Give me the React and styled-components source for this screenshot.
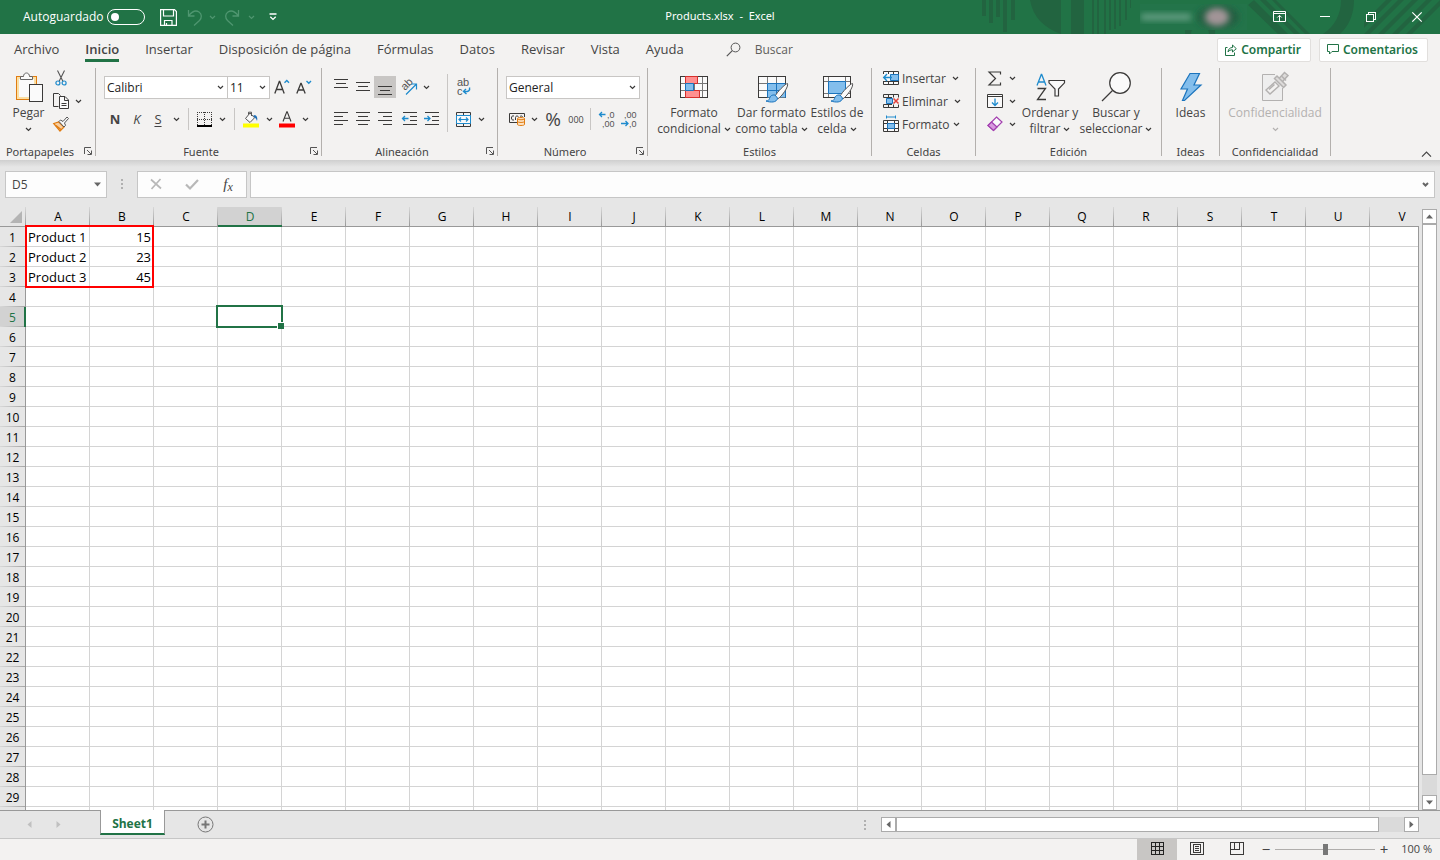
import styled, { createGlobalStyle } from "styled-components";

const GlobalStyle = createGlobalStyle`
  * {
    box-sizing: border-box;
  }
  body {
    margin: 0;
    overflow: hidden;
    font-family: "Open Sans", "Noto Sans", sans-serif;
    font-size: 12px;
    color: #444;
  }
  button, input, select {
    font: inherit;
    color: inherit;
    margin: 0;
    border-radius: 0;
  }
  button {
    display: flex;
    align-items: center;
    justify-content: center;
    padding: 0;
    border: none;
    background: none;
  }
  svg {
    display: block;
    flex: none;
  }
`;

const GREEN = "#217346";
const BLUE = "#1e8bcd";
const DARK = "#3b3a39";

/* ---------- icons ---------- */

function Svg({ w = 16, h = 16, color = DARK, crisp, children }) {
  return (
    <svg
      width={w}
      height={h}
      viewBox={`0 0 ${w} ${h}`}
      fill="none"
      stroke={color}
      overflow="visible"
      shapeRendering={crisp ? "crispEdges" : undefined}
      aria-hidden="true"
    >
      {children}
    </svg>
  );
}

const Glyphs = styled.text`
  font-family: "Liberation Sans", sans-serif;
  font-size: ${(p) => p.$size || 9}px;
  fill: #555;
  stroke: none;
`;

const Chevron = ({ color = DARK, bold }) => (
  <Svg w={7} h={5} color={color}>
    <path d="M1 1l2.5 2.5L6 1" strokeWidth={bold ? 2 : 1.2} />
  </Svg>
);

const SaveIcon = () => (
  <Svg w={17} h={17} color="#fff">
    <path d="M.6.6h13.9l1.9 1.9v13.9H.6z" strokeWidth="1.2" />
    <path d="M3.5 1v6h10V1M4.5 16.5v-5h7.5v5M6.5 14v2.5" strokeWidth="1.2" />
  </Svg>
);

const UndoIcon = () => (
  <Svg w={16} h={17} color="#4f9670">
    <path d="M1.5 1v6h6M1.7 6.8C5 2.5 9 1 12 3s3 6 .5 8.5L7 16.5" strokeWidth="1.3" />
  </Svg>
);

const RedoIcon = () => (
  <Svg w={16} h={17} color="#4f9670">
    <path d="M14.5 1v6h-6M14.3 6.8C11 2.5 7 1 4 3s-3 6-.5 8.5L9 16.5" strokeWidth="1.3" />
  </Svg>
);

const CustomizeIcon = () => (
  <Svg w={8} h={8} color="#fff">
    <path d="M.5 1h7M1.3 3.7L4 6.4l2.7-2.7" strokeWidth="1.3" />
  </Svg>
);

const RibbonModeIcon = () => (
  <Svg w={13} h={11} color="#fff">
    <path d="M.5.5h12v10H.5zM.5 2.5h12M6.5 10V4.5M4.3 6.5l2.2-2.2 2.2 2.2" />
  </Svg>
);

const MinimizeIcon = () => (
  <Svg w={10} h={2} color="#fff" crisp>
    <path d="M0 .5h10" />
  </Svg>
);

const RestoreIcon = () => (
  <Svg w={10} h={10} color="#fff" crisp>
    <path d="M.5 2.5h7v7h-7zM2.5 2V.5h7v7H8" />
  </Svg>
);

const CloseIcon = () => (
  <Svg w={10} h={10} color="#fff">
    <path d="M.3.3l9.4 9.4M9.7.3L.3 9.7" strokeWidth="1.2" />
  </Svg>
);

const SearchIcon = () => (
  <Svg w={15} h={15} color="#555">
    <circle cx="9.5" cy="5.5" r="4.4" />
    <path d="M6.3 8.7L.8 14.2" strokeWidth="1.2" />
  </Svg>
);

const ShareIcon = () => (
  <Svg w={12} h={12} color={GREEN}>
    <path d="M2.5 3.5H.5v8h9v-3" />
    <path d="M3 8c.3-3 2-4.5 4.500-4.500V1L11.3 4.700 7.500 8V5.800C5.500 5.800 4 6.500 3 8z" />
  </Svg>
);

const CommentIcon = () => (
  <Svg w={12} h={11} color={GREEN}>
    <path d="M.5.5h11v7H5L2.5 10V7.5h-2z" />
  </Svg>
);

const PasteIcon = () => (
  <Svg w={28} h={30}>
    <rect x="1.5" y="4.5" width="20" height="23" fill="#fbe0a4" stroke="#e07c11" />
    <rect x="4" y="7" width="15" height="18" fill="#fafafa" stroke="none" />
    <path d="M5.5 7.5v-3h3c0-2 1.2-3.5 3-3.5s3 1.500 3 3.500h3v3z" fill="#fafafa" stroke="#666" />
    <rect x="14.5" y="12.5" width="13" height="17" fill="#fafafa" />
  </Svg>
);

const CutIcon = () => (
  <Svg w={12} h={16}>
    <path d="M2.5.5l5.500 11M9.500.5L4 11.500" stroke="#555" strokeWidth="1.1" />
    <circle cx="2.9" cy="13" r="2" stroke={BLUE} strokeWidth="1.2" />
    <circle cx="9.1" cy="13" r="2" stroke={BLUE} strokeWidth="1.2" />
  </Svg>
);

const CopyIcon = () => (
  <Svg w={16} h={16}>
    <path d="M5.5 13.5h-5V.5h5l2 2" />
    <path d="M6.5 3.5h5.5l3.500 3.500v8.500h-9zM11.5 3.500v4h4M8.500 10.500h5M8.500 12.500h5" fill="#fafafa" />
  </Svg>
);

const PainterIcon = () => (
  <Svg w={16} h={16}>
    <path d="M.7 7.5l5-1.5L11 11l-4 4z" fill="#f8cfa0" stroke="#e07c11" strokeWidth="1.2" />
    <path d="M3 9.5l5 4" stroke="#e07c11" strokeWidth="1.2" />
    <path d="M6 5.5L7.500 4 10 5.500 14 1l1.500 1.500-4 4.500 1 2.300L11 11z" fill="#fafafa" stroke="#555" />
  </Svg>
);

const LauncherIcon = () => (
  <Svg w={8} h={8} color="#555">
    <path d="M.5 7V.5H7M3 3l4 4M7.5 3.5v4h-4" />
  </Svg>
);

const GrowFontIcon = ({ small }) => (
  <Svg w={15} h={18}>
    {small ? (
      <path d="M.8 14.5l4-10h.4l4 10M2.2 11h5.600" strokeWidth="1.3" />
    ) : (
      <path d="M.8 14.5l4.500-12h.4l4.500 12M2.400 10.500h6.200" strokeWidth="1.3" />
    )}
    <path d={small ? "M10.5 2l2.300 2.200L15 2" : "M10.500 3.700l2.300-2.200L15 3.700"} stroke={BLUE} strokeWidth="1.4" />
  </Svg>
);

const BordersIcon = () => (
  <Svg w={15} h={15} crisp>
    <path d="M0 .5h15M0 7.5h15M.5 0v14M7.5 0v14M14.5 0v14" strokeDasharray="1 1" />
    <path d="M0 14h15" strokeWidth="2" stroke="#000" />
  </Svg>
);

const FillIcon = () => (
  <Svg w={16} h={17}>
    <path d="M7 2L2.5 7.5 7 11.500l4.500-4.700zM5.500 3.500V1.200h3V5" fill="#fafafa" stroke="#555" />
    <path d="M10.500 4c3 0 4.500 2 3.500 6-.8-2-1.500-3.500-3-3.700z" fill="#1e6fb8" stroke="none" />
    <path d="M0 14.5h16" stroke="#ff0" strokeWidth="4" />
  </Svg>
);

const FontColorIcon = () => (
  <Svg w={16} h={17}>
    <path d="M4 10.5L7.800.8h.4L12 10.500M5.200 7.200h5.600" strokeWidth="1.1" />
    <path d="M0 14.5h16" stroke="red" strokeWidth="4" />
  </Svg>
);

// each entry is the start and end of one text line
const lineSets = {
  top: [[0, 14], [2, 12], [0, 14]],
  middle: [[0, 14], [2, 12], [0, 14]],
  bottom: [[0, 14], [2, 12], [0, 14]],
  left: [[0, 14], [0, 9], [0, 14], [0, 9]],
  center: [[0, 14], [2, 12], [0, 14], [2, 12]],
  right: [[0, 14], [5, 14], [0, 14], [5, 14]],
};
const lineStart = { top: 1, middle: 4, bottom: 8 };

const LinesIcon = ({ kind }) => {
  const start = lineStart[kind] ?? 2;
  return (
    <Svg w={14} h={18} crisp>
      {lineSets[kind].map(([a, b], i) => (
        <path key={i} d={`M${a} ${start + i * 4 + 0.5}H${b}`} />
      ))}
    </Svg>
  );
};

const IndentIcon = ({ inward }) => (
  <Svg w={15} h={18}>
    <path d="M1 2.5h13.5M8 6.5h6.5M8 10.5h6.5M1 14.5h13.5" shapeRendering="crispEdges" />
    <path
      d={inward ? "M0 8.5h5.5M3.5 6L6 8.5 3.5 11" : "M6.5 8.5H1M3 6L.5 8.5 3 11"}
      stroke={BLUE}
      strokeWidth="1.3"
    />
  </Svg>
);

const OrientationIcon = () => (
  <Svg w={17} h={17}>
    <Glyphs $size={11} transform="translate(5 12) rotate(-45)">ab</Glyphs>
    <path d="M6 15.5l10-10M11 5h5.5v5.5" stroke={BLUE} strokeWidth="1.2" />
  </Svg>
);

const WrapIcon = () => (
  <Svg w={15} h={18}>
    <Glyphs $size={11} x="1" y="8">ab</Glyphs>
    <Glyphs $size={11} x="1" y="17">c</Glyphs>
    <path d="M13.5 9.5c.8 3-1 4.500-6 4M10 11l-2.500 2.500L10.500 16" stroke={BLUE} strokeWidth="1.4" />
  </Svg>
);

const MergeIcon = () => (
  <Svg w={15} h={15}>
    <path d="M.5.5h14v14H.5zM.5 3.5h14M.5 11.5h14M7.5.5v3M7.5 11.5v3" />
    <path d="M.5 3.5h14v8H.5z" fill="#fafafa" stroke={BLUE} />
    <path d="M3 7.5h9M5 5.5l-2 2 2 2M10 5.5l2 2-2 2" stroke={BLUE} strokeWidth="1.2" />
  </Svg>
);

const CurrencyIcon = () => (
  <Svg w={17} h={15}>
    <path d="M8 10.5H.5v-9h15V5" />
    <path d="M5 4c-2-.5-2.5.5-2.5 2S3 8.300 5 8M6.500 8V5.500c0-2 3-2 3 0M11 4.500c1-1 2.500-.5 2.500.5" />
    <path d="M8.5 6.5c0-1.300 7-1.300 7 0v6c0 1.300-7 1.300-7 0z" fill="#fde3c4" stroke="#e07c11" />
    <path d="M8.5 7c1 1 6 1 7 0M8.500 9.700c1 1 6 1 7 0" stroke="#e07c11" />
  </Svg>
);

const DecimalIcon = ({ more }) => (
  <Svg w={17} h={18}>
    <Glyphs x={more ? 8 : 3} y="8">{more ? ",0" : ",00"}</Glyphs>
    <Glyphs x={more ? 3 : 8} y="17">{more ? ",00" : ",0"}</Glyphs>
    {more ? (
      <path d="M6.5 4.5H.7M3 2L.5 4.5 3 7" stroke={BLUE} strokeWidth="1.3" />
    ) : (
      <path d="M0 13.5h7M4.5 11L7 13.5 4.5 16" stroke={BLUE} strokeWidth="1.3" />
    )}
  </Svg>
);

const ConditionalIcon = () => (
  <Svg w={28} h={26}>
    <rect x=".5" y="2.5" width="27" height="21" fill="#fafafa" />
    <path d="M.5 9.5h27M.5 16.5h27M5.5 2.5v21M14.5 2.5v21M22.5 2.5v21" stroke="#777" />
    <path d="M.5 2.5h27v21H.5z" />
    <path d="M5.5 2.5h12v7h-12zM5.5 16.5h14v7h-14z" fill="#ff9090" stroke="#d8302c" />
    <path d="M5.5 9.5h8v7h-8z" fill="#83beec" stroke="#1b74bd" />
  </Svg>
);

const Brush = () => (
  <>
    <path d="M29.5 9.5c-2 0-11 9-12.500 13l2.500 2.500c4-2 11.500-12.500 10-15.500z" fill="#fafafa" stroke="#555" />
    <path d="M17 21c-3-.5-5 1-5.500 3.500-.5 1.500-1.500 2.500-3.500 2.500 4 1.500 11 2 11.500-3z" fill="#83beec" stroke="#1b74bd" />
  </>
);

const TableStyleIcon = () => (
  <Svg w={28} h={26}>
    <rect x=".5" y="2.5" width="27" height="21" fill="#fafafa" />
    <path d="M9.5 9.5h18v14h-18z" fill="#83beec" stroke="none" />
    <path d="M.5 9.5h9M.5 16.5h9M9.5 2.5v7M18.5 2.5v7" stroke="#777" />
    <path d="M9.5 23.5v-14h18v14M9.5 16.5h18M18.5 9.5v14" stroke="#1b74bd" />
    <path d="M9 23.5H.5v-21h27v7" />
    <Brush />
  </Svg>
);

const CellStyleIcon = () => (
  <Svg w={28} h={26}>
    <rect x=".5" y="2.5" width="27" height="21" fill="#fafafa" />
    <path d="M5.5 2.5v21M22.5 2.5v21M.5 7.5h27M.5 19.5h27" stroke="#777" />
    <path d="M5.5 7.5h17v12h-17z" fill="#83beec" stroke="#1b74bd" />
    <path d="M.5 2.5h27v21H.5z" />
    <Brush />
  </Svg>
);

const InsertCellIcon = () => (
  <Svg w={16} h={16}>
    <path d="M.5 4V1.5h15v13H.5V11M5.5 1.5V4M10.5 1.5v13M.5 11.5h15M5.5 11v3.5M8 4.5h7.5" fill="#fafafa" />
    <path d="M7.5 4.5h8v6h-8z" fill="#83beec" stroke="#1b74bd" />
    <path d="M9 7.5H1M4 4L.7 7.5 4 11" stroke={BLUE} strokeWidth="1.4" />
  </Svg>
);

const DeleteCellIcon = () => (
  <Svg w={16} h={16}>
    <path d="M9 4.5H.5v-3h15v3M5.5 1.5v3M10.5 1.5v3M9 11.5H.5v3h15v-3M5.5 11.5v3M10.5 11.5v3" />
    <path d="M3.5 5.5h6v5h-6z" fill="#83beec" stroke="#1b74bd" />
    <path d="M10.5 5.5l5 5M15.5 5.5l-5 5" stroke="#e0403a" strokeWidth="1.5" />
  </Svg>
);

const FormatCellIcon = () => (
  <Svg w={16} h={16}>
    <path d="M3.5-.5v3M12.5-.5v3M3.5 1h9" stroke={BLUE} />
    <path d="M.5 4.5h15v11H.5zM.5 7.5h15M.5 12.5h15M4.5 4.5v11M11.5 4.5v11" fill="#fafafa" />
    <path d="M4.5 7.5h7v5h-7z" fill="#83beec" stroke="#1b74bd" />
  </Svg>
);

const SumIcon = () => (
  <Svg w={14} h={15}>
    <path d="M12.5 3.5V1H1l6.5 6.5L1 14h11.5v-2.5" strokeWidth="1.2" />
  </Svg>
);

const FillDownIcon = () => (
  <Svg w={16} h={14}>
    <path d="M.5.5h15v13H.5zM.5 2.5h15" fill="#fafafa" />
    <path d="M8 4.5v7M5 8.5l3 3 3-3" stroke={BLUE} strokeWidth="1.3" />
  </Svg>
);

const EraserIcon = () => (
  <Svg w={16} h={16}>
    <path d="M9.5 1L15 6 6.5 14.5 1 9.5z" fill="#fafafa" stroke="#a33fb0" strokeWidth="1.2" />
    <path d="M4.5 6l5.5 5-3.5 3.5L1 9.5z" fill="#d79ade" stroke="#a33fb0" strokeWidth="1.2" />
  </Svg>
);

const SortFilterIcon = () => (
  <Svg w={29} h={28}>
    <path d="M1 12.5L5.3 1.5h.4l4.3 11M2.5 9h6" stroke={BLUE} strokeWidth="1.3" />
    <path d="M1.5 15.5h8l-8 11H10" strokeWidth="1.3" />
    <path d="M13 7.5h15.5v2.3l-6 6.200v7H19v-7l-6-6.200z" fill="#fafafa" strokeWidth="1.2" />
  </Svg>
);

const FindIcon = () => (
  <Svg w={30} h={30}>
    <circle cx="19" cy="11" r="10.3" fill="#fafafa" strokeWidth="1.2" />
    <path d="M11.5 18.5L1 29" strokeWidth="1.3" />
  </Svg>
);

const IdeasIcon = () => (
  <Svg w={22} h={30}>
    <path d="M10 1.5h9.5L14 13h7L4.5 28.5h-2L7.5 17H1z" fill="#83beec" stroke="#1b74bd" strokeWidth="1.2" />
  </Svg>
);

const SensitivityIcon = () => (
  <Svg w={28} h={30} color="#b3b1b0">
    <path d="M14 2.5H1.5v26h20V16" fill="#eee" />
    <path d="M5 18l9-8 4 4-9 8zM8 17.5l5.5-5" fill="#f3f2f1" strokeWidth="1.4" />
    <path d="M13.5 6.5L16 4l9 9-2.5 2.5zM18.5 6l5-5.5L27 3.500l-5 5.500M21 4.500l4 4" fill="#dddbda" strokeWidth="1.5" />
  </Svg>
);

const CollapseIcon = () => (
  <Svg w={11} h={7} color="#444">
    <path d="M1 5.7l4.5-4.500L10 5.700" strokeWidth="1.2" />
  </Svg>
);

const CancelIcon = () => (
  <Svg w={12} h={12} color="#b8b8b8">
    <path d="M1 1.5l10 9M10.5 1l-9 10" strokeWidth="1.7" />
  </Svg>
);

const AcceptIcon = () => (
  <Svg w={14} h={11} color="#b8b8b8">
    <path d="M1 5.5l4 4L13 1" strokeWidth="2.2" />
  </Svg>
);

const Triangle = ({ dir = "down", color = "#666" }) => {
  const turn = { down: 0, left: 90, up: 180, right: 270 }[dir];
  return (
    <svg width="7" height="7" viewBox="0 0 7 7" aria-hidden="true">
      <path d="M0 1.5h7L3.5 5.5z" fill={color} transform={`rotate(${turn} 3.5 3.5)`} />
    </svg>
  );
};

const CornerIcon = () => (
  <svg width="12" height="12" viewBox="0 0 12 12" aria-hidden="true">
    <path d="M12 0v12H0z" fill="#b4b4b4" />
  </svg>
);

const AddIcon = () => (
  <Svg w={17} h={17} color="#777">
    <circle cx="8.5" cy="8.5" r="7.5" />
    <path d="M8.5 4.5v8M4.5 8.5h8" strokeWidth="2" />
  </Svg>
);

const NormalViewIcon = () => (
  <Svg w={13} h={13} color="#222" crisp>
    <path d="M.5.5h12v12H.5zM.5 4.5h12M.5 8.5h12M4.5.5v12M8.5.5v12" />
  </Svg>
);

const PageViewIcon = () => (
  <Svg w={14} h={13} crisp>
    <path d="M.5.5h13v12H.5zM3.5 2.5h7v8h-7zM5 4.5h4M5 6.5h4M5 8.5h4" />
  </Svg>
);

const BreakViewIcon = () => (
  <Svg w={14} h={13} crisp>
    <path d="M.5.5h13v12H.5zM4.5.5v7M9.5.5v7M.5 7.5h9" />
  </Svg>
);

/* ---------- title bar ---------- */

const TitleBarStyle = styled.header`
  position: relative;
  display: grid;
  grid-template-columns: 1fr auto 1fr;
  align-items: center;
  height: 34px;
  background: ${GREEN};
  color: #fff;
`;

const Pattern = styled.svg`
  position: absolute;
  top: 0;
  right: 0;
`;

const QuickAccess = styled.div`
  display: flex;
  align-items: center;
  padding-left: 23px;
`;

const AutoSave = styled.label`
  display: flex;
  align-items: center;
  gap: 4px;
  margin-right: 10px;
  padding-bottom: 1px;
`;

const Switch = styled.input`
  appearance: none;
  width: 38px;
  height: 16px;
  padding: 2px 3px;
  border: 1px solid #fff;
  border-radius: 8px;
  &::before {
    content: "";
    display: block;
    width: 8px;
    height: 8px;
    margin-top: 1px;
    border-radius: 50%;
    background: #fff;
  }
`;

const ToolButton = styled.button`
  width: ${(p) => p.$w || 22}px;
  height: 22px;
  flex: none;
  background: ${(p) => (p.$active ? "#c8c6c4" : "none")};
  font-size: ${(p) => p.$size || 12}px;
  font-weight: ${(p) => p.$weight || 400};
  font-style: ${(p) => (p.$italic ? "italic" : "normal")};
  text-decoration: ${(p) => (p.$underline ? "underline" : "none")};
  text-underline-offset: 2px;
`;

const Title = styled.h1`
  margin: 0;
  padding-bottom: 2px;
  font-family: "Noto Sans", sans-serif;
  font-size: 11px;
  font-weight: 400;
  line-height: 16px;
  white-space: pre;
`;

const WindowControls = styled.div`
  position: relative;
  display: flex;
  justify-content: flex-end;
  align-items: center;
`;

const WindowButton = styled.button`
  width: 46px;
  height: 32px;
  padding-bottom: 1px;
`;

const Account = styled.svg`
  margin-right: 9px;
`;

function TitlePattern() {
  return (
    <Pattern width="480" height="34" viewBox="0 0 480 34" fill="#226440" aria-hidden="true">
      <path d="M22 0h4v16h-4zM29 0h4v23h-4zM36 0h4v17h-4zM43 0h4v32h-4zM51 0h4v20h-4z" />
      <path d="M70 0h31v34C84 28 73 17 70 0zM111 0h13v34h-13z" />
      <path d="M132 0h2v34h-2zM137 0h2v34h-2zM144 0h2v34h-2zM149 0h2v30h-2zM154 0h2v29h-2zM159 0h2v26h-2zM165 0h2v20h-2zM170 0h1v8h-1z" />
      <path d="M225 30a14 14 0 0 1 30 4h-6a9 9 0 0 0-18 0h-6z" />
      <path d="M288 5l6-5 34 34h-10zM300 0h6l34 34h-6zM312 0h4l34 34h-5z" />
      <path d="M381 0h13c0 14-5 26-14 34h-17c12-8 18-20 18-34z" />
      <path d="M404 34l34-34h6l-34 34zM418 34l34-34h6l-34 34zM432 34l34-34h6l-34 34zM446 34l34-34v6l-28 28zM404 22l22-22h6l-28 28z" />
    </Pattern>
  );
}

function TitleBar() {
  return (
    <TitleBarStyle>
      <TitlePattern />
      <QuickAccess>
        <AutoSave>
          Autoguardado
          <Switch type="checkbox" />
        </AutoSave>
        <ToolButton $w={26} aria-label="Guardar"><SaveIcon /></ToolButton>
        <ToolButton $w={28} aria-label="Deshacer"><UndoIcon /></ToolButton>
        <Chevron color="#4f9670" />
        <ToolButton $w={32} aria-label="Rehacer"><RedoIcon /></ToolButton>
        <Chevron color="#4f9670" />
        <ToolButton $w={36} aria-label="Personalizar"><CustomizeIcon /></ToolButton>
      </QuickAccess>
      <Title>Products.xlsx  -  Excel</Title>
      <WindowControls>
        <Account width="107" height="26" viewBox="0 0 107 26" aria-label="Cuenta">
          <defs>
            <filter id="soft" x="-30%" y="-60%" width="160%" height="220%">
              <feGaussianBlur stdDeviation="3" />
            </filter>
          </defs>
          <rect width="107" height="26" fill="#23744a" />
          <ellipse cx="78" cy="13" rx="21" ry="12" fill="#235d40" filter="url(#soft)" />
          <rect x="1" y="10" width="50" height="6" fill="#6ba287" filter="url(#soft)" />
          <ellipse cx="77" cy="13" rx="12" ry="9" fill="#a29497" filter="url(#soft)" />
        </Account>
        <WindowButton aria-label="Opciones de la cinta"><RibbonModeIcon /></WindowButton>
        <WindowButton aria-label="Minimizar"><MinimizeIcon /></WindowButton>
        <WindowButton aria-label="Restaurar"><RestoreIcon /></WindowButton>
        <WindowButton aria-label="Cerrar"><CloseIcon /></WindowButton>
      </WindowControls>
    </TitleBarStyle>
  );
}

/* ---------- tabs ---------- */

const TabBar = styled.nav`
  display: flex;
  align-items: center;
  gap: 26px;
  height: 32px;
  padding: 0 12px 0 14px;
  background: #f3f2f1;
  font-size: 13px;
`;

const Tab = styled.button`
  height: 24px;
  padding-top: 1px;
  border-bottom: 3px solid ${(p) => (p.$active ? GREEN : "transparent")};
  font-weight: ${(p) => (p.$active ? 600 : 400)};
  white-space: nowrap;
`;

const TabSearch = styled.button`
  gap: 14px;
  margin-left: 16px;
  padding-bottom: 2px;
  font-size: 12px;
  color: #605e5c;
`;

const TabActions = styled.div`
  display: flex;
  gap: 8px;
  margin-left: auto;
`;

const ActionButton = styled.button`
  gap: 4px;
  height: 24px;
  padding: 0 9px 1px 7px;
  border: 1px solid #e1dfdd;
  border-radius: 2px;
  background: #fff;
  color: ${GREEN};
  font-family: "Noto Sans", sans-serif;
  font-size: 12px;
  font-weight: 600;
`;

const tabs = ["Archivo", "Inicio", "Insertar", "Disposición de página", "Fórmulas", "Datos", "Revisar", "Vista", "Ayuda"];

function Tabs() {
  return (
    <TabBar>
      {tabs.map((tab) => (
        <Tab key={tab} $active={tab === "Inicio"}>{tab}</Tab>
      ))}
      <TabSearch><SearchIcon />Buscar</TabSearch>
      <TabActions>
        <ActionButton><ShareIcon />Compartir</ActionButton>
        <ActionButton><CommentIcon />Comentarios</ActionButton>
      </TabActions>
    </TabBar>
  );
}

/* ---------- ribbon ---------- */

const RibbonStyle = styled.div`
  display: flex;
  height: 94px;
  padding-top: 2px;
  background: #f3f2f1;
`;

const GroupStyle = styled.section`
  display: flex;
  flex-direction: column;
  width: ${(p) => p.$w}px;
  height: 91px;
  flex: none;
`;

const GroupBody = styled.div`
  display: flex;
  flex: 1;
  justify-content: ${(p) => (p.$center ? "center" : "flex-start")};
  padding-left: ${(p) => p.$pad}px;
`;

const GroupFooter = styled.div`
  display: flex;
  align-items: center;
  height: 16px;
  font-family: "Noto Sans", sans-serif;
  font-size: 11px;
`;

const GroupLabel = styled.span`
  flex: 1;
  text-align: center;
`;

const Launcher = styled.button`
  width: 15px;
  height: 14px;
`;

const GroupDivider = styled.div`
  width: 1px;
  height: 88px;
  flex: none;
  background: #b3b0ad;
`;

const Divider = styled.div`
  width: 1px;
  height: ${(p) => p.$h || 22}px;
  margin: ${(p) => (p.$h ? "6px 4px 0" : "0 5px 0 4px")};
  flex: none;
  background: #c8c6c4;
`;

const Rows = styled.div`
  display: flex;
  flex-direction: column;
  gap: ${(p) => p.$gap || 10}px;
  width: ${(p) => (p.$w ? `${p.$w}px` : "auto")};
  padding-top: 8px;
`;

const TightRows = styled.div`
  display: flex;
  flex-direction: column;
  gap: 1px;
  margin-top: -1px;
`;

const Row = styled.div`
  display: flex;
  align-items: center;
`;

const BigButton = styled.button`
  flex-direction: column;
  justify-content: flex-start;
  gap: 3px;
  width: ${(p) => p.$w}px;
  padding-top: 4px;
  line-height: 16px;
  white-space: nowrap;
  &:disabled {
    color: #b3b1b0;
  }
`;

const BigIcon = styled.span`
  display: flex;
  align-items: center;
  height: 30px;
`;

const BigLine = styled.span`
  display: flex;
  align-items: center;
  justify-content: center;
  gap: 3px;
  min-height: 16px;
`;

const CellButton = styled.button`
  gap: 3px;
  height: 22px;
`;

const CellChevron = styled.span`
  margin-left: ${(p) => (p.$near ? 0 : 3)}px;
`;

const ComboStyle = styled.label`
  display: flex;
  align-items: center;
  width: ${(p) => p.$w}px;
  height: 23px;
  padding-right: 3px;
  border: 1px solid #c8c6c4;
  background: #fff;
  & + & {
    margin-left: -1px;
  }
`;

const ComboSelect = styled.select`
  appearance: none;
  flex: 1;
  min-width: 0;
  padding: 0 0 0 2px;
  border: none;
  background: none;
  color: #222;
`;

const Collapse = styled.button`
  width: 27px;
  height: 12px;
  margin: auto 0 0 auto;
`;

function Combo({ label, value, w }) {
  return (
    <ComboStyle $w={w}>
      <ComboSelect aria-label={label}>
        <option>{value}</option>
      </ComboSelect>
      <Chevron />
    </ComboStyle>
  );
}

function Group({ label, w, pad = 0, center, launcher, children }) {
  return (
    <>
      <GroupStyle $w={w}>
        <GroupBody $pad={pad} $center={center}>{children}</GroupBody>
        <GroupFooter>
          <GroupLabel>{label}</GroupLabel>
          {launcher && <Launcher aria-label={`Más opciones de ${label}`}><LauncherIcon /></Launcher>}
        </GroupFooter>
      </GroupStyle>
      <GroupDivider />
    </>
  );
}

function Big({ w, icon, lines, chevron, disabled }) {
  return (
    <BigButton $w={w} disabled={disabled}>
      <BigIcon>{icon}</BigIcon>
      <span>
        {lines.map((line, i) => (
          <BigLine key={i}>
            {line}
            {chevron && i === lines.length - 1 && <Chevron color={disabled ? "#b3b1b0" : DARK} />}
          </BigLine>
        ))}
      </span>
    </BigButton>
  );
}

function Drop({ w = 14 }) {
  return <ToolButton $w={w} aria-label="Más opciones"><Chevron /></ToolButton>;
}

function Ribbon() {
  return (
    <RibbonStyle>
      <Group label="Portapapeles" w={95} pad={7} launcher>
        <Big w={43} icon={<PasteIcon />} lines={["Pegar", ""]} chevron />
        <TightRows>
          <ToolButton><CutIcon /></ToolButton>
          <Row>
            <ToolButton><CopyIcon /></ToolButton>
            <Drop w={12} />
          </Row>
          <ToolButton><PainterIcon /></ToolButton>
        </TightRows>
      </Group>

      <Group label="Fuente" w={225} pad={8} launcher>
        <Rows $gap={9}>
          <Row>
            <Combo label="Fuente" value="Calibri" w={124} />
            <Combo label="Tamaño de fuente" value="11" w={43} />
            <ToolButton $w={23}><GrowFontIcon /></ToolButton>
            <ToolButton $w={20}><GrowFontIcon small /></ToolButton>
          </Row>
          <Row>
            <ToolButton $weight={700} $size={13}>N</ToolButton>
            <ToolButton $italic $size={13}>K</ToolButton>
            <ToolButton $w={20} $underline $size={13}>S</ToolButton>
            <Drop w={16} />
            <Divider />
            <ToolButton $w={20}><BordersIcon /></ToolButton>
            <Drop w={16} />
            <Divider />
            <ToolButton><FillIcon /></ToolButton>
            <Drop />
            <ToolButton><FontColorIcon /></ToolButton>
            <Drop />
          </Row>
        </Rows>
      </Group>

      <Group label="Alineación" w={175} pad={8} launcher>
        <Rows $w={113}>
          <Row>
            <ToolButton><LinesIcon kind="top" /></ToolButton>
            <ToolButton><LinesIcon kind="middle" /></ToolButton>
            <ToolButton $active><LinesIcon kind="bottom" /></ToolButton>
            <ToolButton $w={25}><OrientationIcon /></ToolButton>
            <Drop w={10} />
          </Row>
          <Row>
            <ToolButton><LinesIcon kind="left" /></ToolButton>
            <ToolButton><LinesIcon kind="center" /></ToolButton>
            <ToolButton><LinesIcon kind="right" /></ToolButton>
            <ToolButton $w={27}><IndentIcon /></ToolButton>
            <ToolButton $w={17}><IndentIcon inward /></ToolButton>
          </Row>
        </Rows>
        <Divider $h={58} />
        <Rows>
          <ToolButton><WrapIcon /></ToolButton>
          <Row>
            <ToolButton><MergeIcon /></ToolButton>
            <Drop />
          </Row>
        </Rows>
      </Group>

      <Group label="Número" w={149} pad={8} launcher>
        <Rows $gap={9}>
          <Combo label="Formato de número" value="General" w={134} />
          <Row>
            <ToolButton><CurrencyIcon /></ToolButton>
            <Drop w={12} />
            <ToolButton $w={26} $size={19} $weight={400}>%</ToolButton>
            <ToolButton $w={20} $size={9}>000</ToolButton>
            <Divider />
            <ToolButton><DecimalIcon more /></ToolButton>
            <ToolButton><DecimalIcon /></ToolButton>
          </Row>
        </Rows>
      </Group>

      <Group label="Estilos" w={223} pad={7}>
        <Big w={78} icon={<ConditionalIcon />} lines={["Formato", "condicional"]} chevron />
        <Big w={77} icon={<TableStyleIcon />} lines={["Dar formato", "como tabla"]} chevron />
        <Big w={54} icon={<CellStyleIcon />} lines={["Estilos de", "celda"]} chevron />
      </Group>

      <Group label="Celdas" w={103} pad={11}>
        <TightRows>
          <Row>
            <CellButton><InsertCellIcon />Insertar<CellChevron><Chevron /></CellChevron></CellButton>
          </Row>
          <Row>
            <CellButton><DeleteCellIcon />Eliminar<CellChevron><Chevron /></CellChevron></CellButton>
          </Row>
          <Row>
            <CellButton><FormatCellIcon />Formato<CellChevron $near><Chevron /></CellChevron></CellButton>
          </Row>
        </TightRows>
      </Group>

      <Group label="Edición" w={185} pad={8}>
        <TightRows>
          <Row><ToolButton><SumIcon /></ToolButton><Drop w={12} /></Row>
          <Row><ToolButton><FillDownIcon /></ToolButton><Drop w={12} /></Row>
          <Row><ToolButton><EraserIcon /></ToolButton><Drop w={12} /></Row>
        </TightRows>
        <Big w={64} icon={<SortFilterIcon />} lines={["Ordenar y", "filtrar"]} chevron />
        <Big w={68} icon={<FindIcon />} lines={["Buscar y", "seleccionar"]} chevron />
      </Group>

      <Group label="Ideas" w={57} center>
        <Big w={50} icon={<IdeasIcon />} lines={["Ideas"]} />
      </Group>

      <Group label="Confidencialidad" w={110} center>
        <Big w={100} icon={<SensitivityIcon />} lines={["Confidencialidad", ""]} chevron disabled />
      </Group>

      <Collapse aria-label="Contraer la cinta"><CollapseIcon /></Collapse>
    </RibbonStyle>
  );
}

/* ---------- formula bar ---------- */

const FormulaBarStyle = styled.div`
  display: flex;
  align-items: center;
  height: 47px;
  padding: 1px 5px 0;
  background: linear-gradient(#cfcfcf, #e6e6e6 7px);
`;

const FieldBox = styled.div`
  display: flex;
  align-items: center;
  width: ${(p) => (p.$w ? `${p.$w}px` : "auto")};
  flex: ${(p) => (p.$w ? "none" : 1)};
  height: 27px;
  padding-right: ${(p) => (p.$buttons ? 0 : 5)}px;
  margin-right: ${(p) => (p.$buttons ? 3 : 0)}px;
  border: 1px solid #c6c6c6;
  background: #fdfdfd;
`;

const FieldInput = styled.input`
  flex: 1;
  min-width: 0;
  padding: 0 6px;
  border: none;
  outline: none;
  background: none;
`;

const FormulaButton = styled.button`
  width: 36px;
  height: 24px;
  font-family: "Liberation Serif", serif;
  font-size: 15px;
  font-style: italic;
  color: #444;
  & sub {
    font-size: 12px;
    line-height: 8px;
    vertical-align: -2px;
  }
`;

const Dots = styled.span`
  width: 2px;
  height: 10px;
  margin: ${(p) => p.$margin};
  flex: none;
  background: repeating-linear-gradient(#b0b0b0 0 2px, transparent 2px 4px);
`;

function FormulaBar() {
  return (
    <FormulaBarStyle>
      <FieldBox $w={102}>
        <FieldInput aria-label="Cuadro de nombres" defaultValue="D5" />
        <button aria-label="Nombres"><Triangle /></button>
      </FieldBox>
      <Dots $margin="0 14px" />
      <FieldBox $w={110} $buttons>
        <FormulaButton aria-label="Cancelar"><CancelIcon /></FormulaButton>
        <FormulaButton aria-label="Introducir"><AcceptIcon /></FormulaButton>
        <FormulaButton aria-label="Insertar función"><span>f<sub>x</sub></span></FormulaButton>
      </FieldBox>
      <FieldBox>
        <FieldInput aria-label="Barra de fórmulas" />
        <button aria-label="Expandir"><Chevron color="#666" bold /></button>
      </FieldBox>
    </FormulaBarStyle>
  );
}

/* ---------- sheet ---------- */

const SheetArea = styled.main`
  display: flex;
  flex: 1;
  min-height: 0;
  background: #e6e6e6;
`;

const SheetClip = styled.div`
  position: relative;
  flex: 1;
  min-width: 0;
  overflow: hidden;
`;

const SheetTable = styled.table`
  table-layout: fixed;
  width: 1434px;
  border-collapse: separate;
  border-spacing: 0;
  font-size: 13px;
  line-height: 16px;
  color: #000;
`;

const ColHead = styled.th`
  width: ${(p) => (p.$corner ? 26 : 64)}px;
  height: 20px;
  padding: 0;
  border-bottom: 1px solid ${(p) => (p.$active ? GREEN : "#999")};
  box-shadow: ${(p) => (p.$active ? `inset 0 -1px ${GREEN}` : "none")};
  background:
    linear-gradient(#d8d8d8, #999) right / 1px 100% no-repeat,
    ${(p) => (p.$active ? "#d2d2d2" : "#e6e6e6")};
  font-size: 12px;
  font-weight: 400;
  color: ${(p) => (p.$active ? GREEN : "#000")};
  & svg {
    margin-left: 10px;
  }
`;

const RowHead = styled.th`
  height: 20px;
  padding: 1px 0 0;
  border-right: 1px solid ${(p) => (p.$active ? GREEN : "#999")};
  box-shadow: ${(p) => (p.$active ? `inset -1px 0 ${GREEN}` : "none")};
  background:
    linear-gradient(90deg, #d8d8d8, #a6a6a6) bottom / 100% 1px no-repeat,
    ${(p) => (p.$active ? "#d2d2d2" : "#e6e6e6")};
  font-size: 12px;
  font-weight: 400;
  color: ${(p) => (p.$active ? GREEN : "#000")};
`;

const Cell = styled.td`
  position: relative;
  z-index: ${(p) => (p.$selected ? 1 : "auto")};
  height: 20px;
  padding: 1px 2px 0;
  border-right: 1px solid #d4d4d4;
  border-bottom: 1px solid #d4d4d4;
  background: #fff;
  text-align: ${(p) => (p.$number ? "right" : "left")};
  white-space: nowrap;
`;

const Selection = styled.div`
  position: absolute;
  inset: -2px;
  border: 2px solid ${GREEN};
  &::after {
    content: "";
    position: absolute;
    right: -3px;
    bottom: -3px;
    width: 6px;
    height: 6px;
    border: 1px solid #fff;
    border-width: 1px 0 0 1px;
    background: ${GREEN};
  }
`;

const RangeFrame = styled.div`
  position: absolute;
  top: 18px;
  left: 25px;
  width: 129px;
  height: 63px;
  border: 2px solid #f00;
`;

const SheetEdge = styled.div`
  width: 1px;
  margin-top: 19px;
  background: #999;
`;

const ScrollColumn = styled.div`
  display: flex;
  flex-direction: column;
  width: 15px;
  margin: 2px 3px 0;
  background: #dadada;
`;

const ScrollRow = styled.div`
  display: flex;
  width: 538px;
  height: 15px;
  margin-right: 21px;
  background: #dadada;
`;

const ScrollButton = styled.button`
  width: 15px;
  height: 15px;
  flex: none;
  border: 1px solid #ababab;
  background: #fff;
`;

const ScrollThumb = styled.div`
  flex: 1;
  border: 1px solid #ababab;
  background: #fff;
  margin: ${(p) => (p.$vertical ? "0 0 20px" : "0 25px 0 0")};
`;

const columns = "ABCDEFGHIJKLMNOPQRSTUV".split("");
const rows = Array.from({ length: 30 }, (_, i) => i + 1);
const data = {
  A1: "Product 1", B1: 15,
  A2: "Product 2", B2: 23,
  A3: "Product 3", B3: 45,
};

function Sheet() {
  return (
    <SheetArea>
      <SheetClip>
        <SheetTable>
          <thead>
            <tr>
              <ColHead $corner><CornerIcon /></ColHead>
              {columns.map((col) => (
                <ColHead key={col} scope="col" $active={col === "D"}>{col}</ColHead>
              ))}
            </tr>
          </thead>
          <tbody>
            {rows.map((row) => (
              <tr key={row}>
                <RowHead scope="row" $active={row === 5}>{row}</RowHead>
                {columns.map((col) => {
                  const value = data[col + row];
                  const selected = col + row === "D5";
                  return (
                    <Cell key={col} $number={typeof value === "number"} $selected={selected}>
                      {value}
                      {selected && <Selection />}
                    </Cell>
                  );
                })}
              </tr>
            ))}
          </tbody>
        </SheetTable>
        <RangeFrame />
      </SheetClip>
      <SheetEdge />
      <ScrollColumn>
        <ScrollButton aria-label="Subir"><Triangle dir="up" /></ScrollButton>
        <ScrollThumb $vertical />
        <ScrollButton aria-label="Bajar"><Triangle /></ScrollButton>
      </ScrollColumn>
    </SheetArea>
  );
}

/* ---------- sheet tabs and status bar ---------- */

const SheetBar = styled.div`
  display: flex;
  align-items: center;
  height: 29px;
  border-top: 1px solid #999;
  border-bottom: 1px solid #c6c6c6;
  background: #e6e6e6;
`;

const SheetNav = styled.div`
  display: flex;
  gap: 22px;
  width: 100px;
  padding-left: 26px;
`;

const SheetTab = styled.button`
  align-self: flex-start;
  width: 65px;
  height: 25px;
  margin-top: -1px;
  padding-top: 3px;
  border-right: 1px solid #999;
  border-left: 1px solid #999;
  border-bottom: 2px solid ${GREEN};
  background: #fff;
  color: ${GREEN};
  font-weight: 700;
`;

const AddSheet = styled.button`
  margin: 0 auto 0 32px;
`;

const StatusBar = styled.footer`
  display: flex;
  justify-content: flex-end;
  align-items: center;
  height: 21px;
  padding-right: 8px;
  background: #f3f2f1;
`;

const ViewButton = styled.button`
  width: 40px;
  height: 21px;
  padding-bottom: 2px;
  background: ${(p) => (p.$active ? "#c8c6c4" : "none")};
`;

const ZoomButton = styled.button`
  width: 18px;
  height: 20px;
  padding-bottom: 2px;
  font-size: 15px;
`;

const ZoomSlider = styled.input`
  appearance: none;
  width: 100px;
  height: 11px;
  background: linear-gradient(#b0aeac, #b0aeac) center / 100% 1px no-repeat;
  &::-webkit-slider-thumb {
    appearance: none;
    width: 5px;
    height: 11px;
    background: #777;
  }
`;

const ZoomValue = styled.span`
  width: 39px;
  padding-bottom: 2px;
  font-size: 11px;
  text-align: right;
  white-space: nowrap;
`;

function Bottom() {
  return (
    <>
      <SheetBar>
        <SheetNav>
          <Triangle dir="left" color="#c0c0c0" />
          <Triangle dir="right" color="#c0c0c0" />
        </SheetNav>
        <SheetTab>Sheet1</SheetTab>
        <AddSheet aria-label="Hoja nueva"><AddIcon /></AddSheet>
        <Dots $margin="0 15px 0 0" />
        <ScrollRow>
          <ScrollButton aria-label="Izquierda"><Triangle dir="left" /></ScrollButton>
          <ScrollThumb />
          <ScrollButton aria-label="Derecha"><Triangle dir="right" /></ScrollButton>
        </ScrollRow>
      </SheetBar>
      <StatusBar>
        <ViewButton $active aria-label="Normal"><NormalViewIcon /></ViewButton>
        <ViewButton aria-label="Diseño de página"><PageViewIcon /></ViewButton>
        <ViewButton aria-label="Salto de página"><BreakViewIcon /></ViewButton>
        <ZoomButton aria-label="Alejar">−</ZoomButton>
        <ZoomSlider type="range" min="0" max="200" defaultValue="100" aria-label="Zoom" />
        <ZoomButton aria-label="Acercar">+</ZoomButton>
        <ZoomValue>100 %</ZoomValue>
      </StatusBar>
    </>
  );
}

const AppStyle = styled.div`
  display: flex;
  flex-direction: column;
  height: 100vh;
  overflow: hidden;
`;

function App() {
  return (
    <>
      <GlobalStyle />
      <AppStyle>
        <TitleBar />
        <Tabs />
        <Ribbon />
        <FormulaBar />
        <Sheet />
        <Bottom />
      </AppStyle>
    </>
  );
}

export default App;
